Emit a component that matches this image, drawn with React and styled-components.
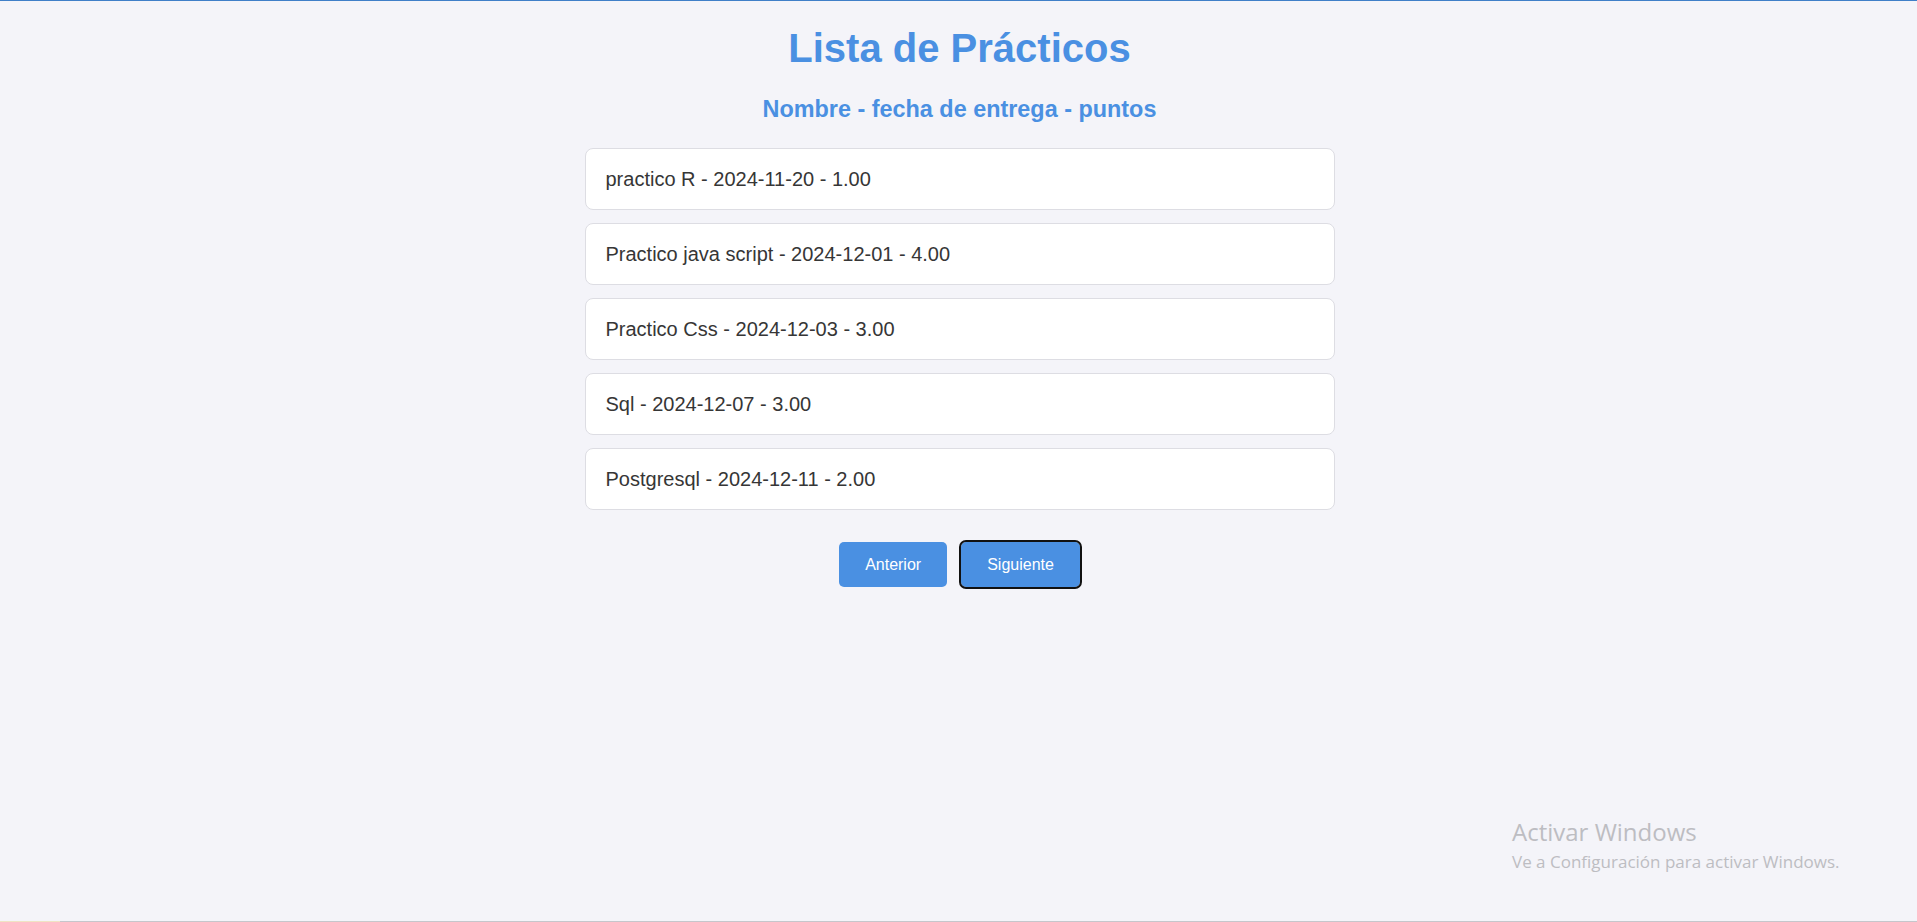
import React from "react";
import styled, { createGlobalStyle } from "styled-components";

const GlobalStyle = createGlobalStyle`
  html, body {
    margin: 0;
    padding: 0;
    background: #f4f4f9;
  }
  body {
    font-family: "Liberation Sans", Arial, sans-serif;
    min-height: 922px;
  }
`;

const Page = styled.div`
  position: relative;
  min-height: 922px;
  box-sizing: border-box;
  border-top: 1px solid #3f7fc8;
  display: flex;
  flex-direction: column;
  align-items: center;
  padding-top: 24px;
  padding-left: 2px;
`;

const Title = styled.h1`
  margin: 0;
  font-size: 40px;
  line-height: 46px;
  font-weight: 700;
  color: #4a90e2;
  text-align: center;
`;

const Subtitle = styled.h2`
  margin: 24px 0 0;
  font-size: 23.4px;
  line-height: 28px;
  font-weight: 700;
  color: #4a90e2;
  text-align: center;
`;

const List = styled.ul`
  list-style: none;
  margin: 25px 0 0;
  padding: 0;
  width: 750px;
  display: flex;
  flex-direction: column;
  gap: 13px;
`;

const Item = styled.li`
  box-sizing: border-box;
  height: 62px;
  background: #ffffff;
  border: 1px solid #dddde3;
  border-radius: 8px;
  padding: 18px 20px;
  font-size: 20px;
  line-height: 24px;
  color: #363636;
`;

const Pager = styled.div`
  margin-top: 32px;
  display: flex;
  gap: 14px;
  align-items: center;
`;

const Button = styled.button`
  height: 45px;
  padding: 0 26px;
  border: none;
  border-radius: 5px;
  background: #4a90e2;
  color: #ffffff;
  font-family: "Liberation Sans", Arial, sans-serif;
  font-size: 16px;
  cursor: pointer;
  outline: ${(p) => (p.$focused ? "2px solid #111111" : "none")};
  outline-offset: 0;
`;

const Watermark = styled.div`
  position: absolute;
  left: 1512px;
  top: 816px;
  font-family: "Open Sans", "Noto Sans", sans-serif;
  color: #bdbdc2;
  pointer-events: none;
`;

const WatermarkTitle = styled.div`
  font-size: 24px;
  line-height: 30px;
`;

const WatermarkText = styled.div`
  margin-top: 4px;
  font-size: 17px;
  line-height: 22px;
`;

const BottomBar = styled.div`
  position: absolute;
  left: 0;
  right: 0;
  bottom: 0;
  height: 1px;
  background: linear-gradient(to right, #efe4c4 0, #efe4c4 60px, #c6c6cb 60px);
`;

const practicos = [
  "practico R - 2024-11-20 - 1.00",
  "Practico java script - 2024-12-01 - 4.00",
  "Practico Css - 2024-12-03 - 3.00",
  "Sql - 2024-12-07 - 3.00",
  "Postgresql - 2024-12-11 - 2.00",
];

export default function App() {
  return (
    <>
      <GlobalStyle />
      <Page>
        <Title>Lista de Prácticos</Title>
        <Subtitle>Nombre - fecha de entrega - puntos</Subtitle>
        <List>
          {practicos.map((p) => (
            <Item key={p}>{p}</Item>
          ))}
        </List>
        <Pager>
          <Button>Anterior</Button>
          <Button $focused>Siguiente</Button>
        </Pager>
        <Watermark>
          <WatermarkTitle>Activar Windows</WatermarkTitle>
          <WatermarkText>Ve a Configuración para activar Windows.</WatermarkText>
        </Watermark>
        <BottomBar />
      </Page>
    </>
  );
}
